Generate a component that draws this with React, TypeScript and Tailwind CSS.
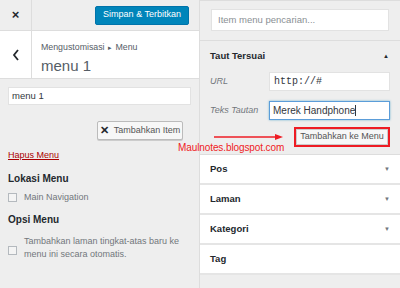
import React from 'react';

const font = { fontFamily: '"Liberation Sans", Arial, sans-serif' };

function Checkbox() {
  return <span className="inline-block w-[9px] h-[9px] border border-[#b4b9be] bg-[#f4f4f4] shrink-0" />;
}

function ClosedSection({ title, arrow = true }: { title: string; arrow?: boolean }) {
  return (
    <div className="h-[30px] bg-white border-b-2 border-[#e5e5e5] flex items-center justify-between pl-[10px] pr-[10px]">
      <span className="text-[9.5px] font-bold text-[#23282d]">{title}</span>
      {arrow && <span className="text-[6px] text-[#72777c]">▼</span>}
    </div>
  );
}

export default function App() {
  return (
    <div style={font} className="relative w-[400px] h-[288px] overflow-hidden flex bg-[#eeeeee]">
      {/* left panel */}
      <div className="w-[200px] flex flex-col border-r border-[#dddddd]">
        <div className="h-[31px] flex border-b border-[#dddddd] bg-[#eeeeee]">
          <div className="w-[32px] border-r border-[#dddddd] flex items-center justify-center text-[13px] font-bold text-[#23282d]">×</div>
          <div className="flex-1 flex items-center justify-end pr-[10px]">
            <button className="h-[19px] px-[7px] bg-[#0085ba] border border-[#0073aa] rounded-[2px] text-white text-[9px]">
              Simpan &amp; Terbitkan
            </button>
          </div>
        </div>
        <div className="h-[48px] flex bg-white border-b border-[#dddddd]">
          <div className="w-[32px] border-r border-[#dddddd] flex items-center justify-center">
            <svg width="8" height="12" viewBox="0 0 8 12">
              <path d="M6 1 L2 6 L6 11" fill="none" stroke="#23282d" strokeWidth="1.8" />
            </svg>
          </div>
          <div className="pl-[9px] pt-[10px]">
            <div className="text-[8.8px] text-[#555d66]">Mengustomisasi <span className="text-[7px] px-[1px]">▸</span> Menu</div>
            <div className="text-[15px] text-[#555d66] mt-[3px] leading-[18px]">menu 1</div>
          </div>
        </div>
        <div className="flex-1 px-[8px] pt-[8px]">
          <div className="h-[18px] bg-white border border-[#e2e2e2] text-[9.5px] text-[#32373c] flex items-center px-[3px]">menu 1</div>
          <div className="flex justify-end mt-[16px] pr-[8px]">
            <button className="h-[19px] w-[86px] bg-[#f7f7f7] border border-[#bbbbbb] rounded-[2px] shadow-[0_1px_0_#ccc] flex items-center justify-center gap-[5px] text-[9px] text-[#555]">
              <span className="text-[11px] font-bold text-[#23282d] leading-none">✕</span>
              Tambahkan Item
            </button>
          </div>
          <div className="mt-[9px] text-[9px] text-[#a00] underline">Hapus Menu</div>
          <div className="mt-[8px] text-[10px] font-bold text-[#23282d]">Lokasi Menu</div>
          <div className="mt-[5px] flex items-center gap-[7px]">
            <Checkbox />
            <span className="text-[9px] text-[#72777c]">Main Navigation</span>
          </div>
          <div className="mt-[8px] text-[10px] font-bold text-[#23282d]">Opsi Menu</div>
          <div className="mt-[8px] flex items-start gap-[7px]">
            <span className="mt-[3px]"><Checkbox /></span>
            <span className="text-[9px] leading-[13px] text-[#72777c]">
              Tambahkan laman tingkat-atas baru ke<br />menu ini secara otomatis.
            </span>
          </div>
        </div>
      </div>

      {/* right panel */}
      <div className="flex-1 flex flex-col border-t border-[#dddddd]">
        <div className="h-[40px] px-[11px] pt-[8px] border-b border-[#dddddd]">
          <div className="h-[22px] bg-white border border-[#e2e2e2] flex items-center px-[6px] text-[9.5px] text-[#8a8f94]">
            Item menu pencarian...
          </div>
        </div>
        <div className="px-[10px] pt-[9px] pb-[7px] border-b border-[#dddddd]">
          <div className="flex items-center justify-between h-[12px]">
            <span className="text-[9.5px] font-bold text-[#23282d]">Taut Tersuai</span>
            <span className="text-[6px] text-[#23282d] pr-[1px]">▲</span>
          </div>
          <div className="mt-[10px] flex items-center h-[19px]">
            <span className="w-[59px] text-[9px] italic text-[#72777c]">URL</span>
            <div className="w-[121px] h-[19px] bg-white border border-[#e2e2e2] flex items-center px-[4px] text-[10px] text-[#32373c]" style={{ fontFamily: '"Liberation Mono", monospace' }}>http://#</div>
          </div>
          <div className="mt-[10px] flex items-center h-[19px]">
            <span className="w-[59px] text-[9px] italic text-[#72777c]">Teks Tautan</span>
            <div className="w-[121px] h-[19px] bg-white border border-[#5b9dd9] shadow-[0_0_2px_rgba(30,140,190,0.6)] flex items-center px-[3px] text-[10px] text-[#32373c]">
              Merek Handphone<span className="w-px h-[11px] bg-[#32373c]" />
            </div>
          </div>
          <div className="mt-[7px] flex justify-end">
            <div className="border-2 border-[#ee1c24]">
              <button className="h-[16px] w-[92px] bg-[#f7f7f7] border border-[#cccccc] text-[9px] text-[#555] flex items-center justify-center">
                Tambahkan ke Menu
              </button>
            </div>
          </div>
        </div>
        <ClosedSection title="Pos" />
        <ClosedSection title="Laman" />
        <ClosedSection title="Kategori" />
        <ClosedSection title="Tag" arrow={false} />
      </div>

      {/* annotation overlays */}
      <svg className="absolute left-[213px] top-[133px]" width="72" height="8" viewBox="0 0 72 8">
        <line x1="1" y1="4" x2="64" y2="4" stroke="#ee1c24" strokeWidth="1.5" />
        <path d="M62 1 L70 4 L62 7 Z" fill="#ee1c24" />
      </svg>
      <div className="absolute left-[178px] top-[142px] text-[10px] text-[#ee1c24] tracking-[-0.1px] leading-[12px]">
        Maulnotes.blogspot.com
      </div>
    </div>
  );
}
